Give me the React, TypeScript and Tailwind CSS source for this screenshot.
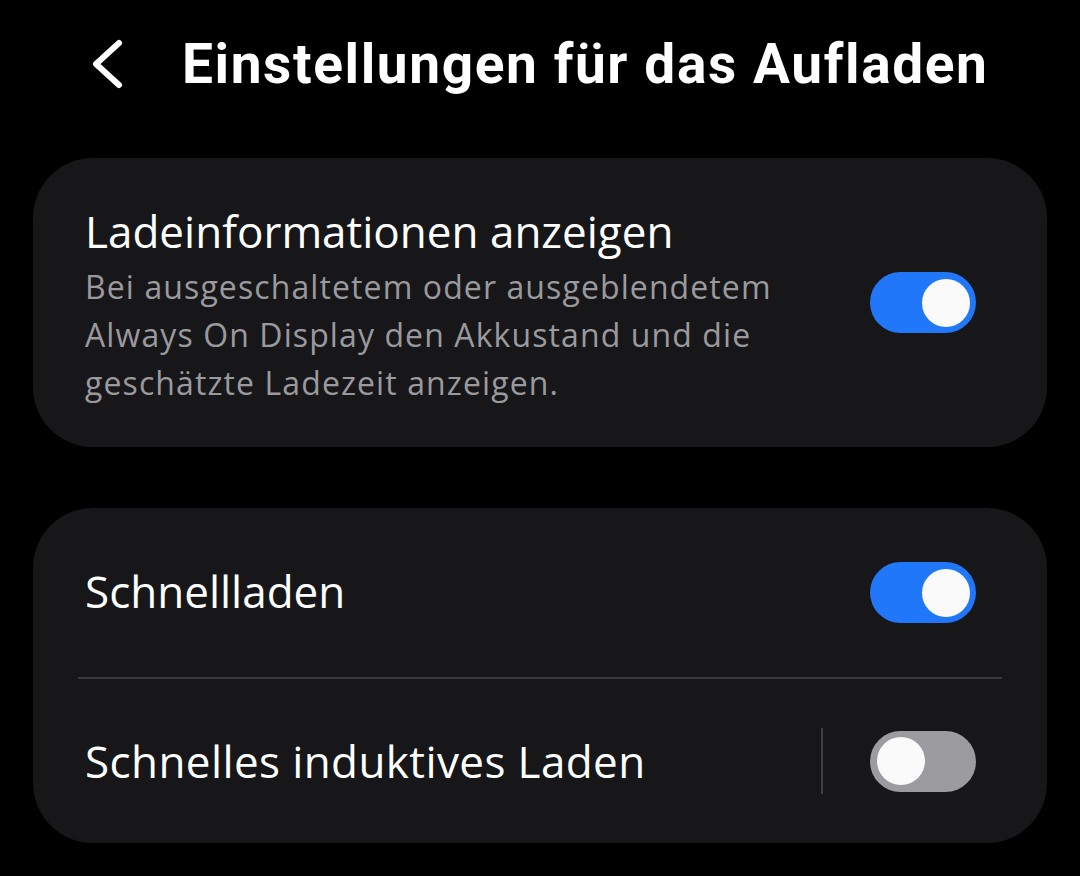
import React from "react";

function Toggle({ on }: { on: boolean }) {
  return (
    <div
      className={
        on
          ? "w-[106px] h-[61px] rounded-full bg-[#2177fa] flex items-center justify-end pr-[6px] shrink-0"
          : "w-[106px] h-[61px] rounded-full bg-[#9b9ba0] flex items-center justify-start pl-[7px] shrink-0"
      }
    >
      <div className="w-[48px] h-[48px] rounded-full bg-[#fafafa]" />
    </div>
  );
}

export default function App() {
  return (
    <div
      className="w-[1080px] h-[876px] bg-black text-white overflow-hidden"
      style={{ fontFamily: "'Open Sans', Roboto, sans-serif" }}
    >
      <div className="flex items-center h-[126px] pl-[86px] pt-[2px]">
        <svg width="40" height="52" viewBox="0 0 40 52" className="shrink-0">
          <path d="M33 5 L10 26 L33 47" fill="none" stroke="#fff" strokeWidth="6" strokeLinecap="round" strokeLinejoin="round" />
        </svg>
        <h1
          className="ml-[56px] text-[55px] font-bold leading-none tracking-[1.6px]"
          style={{ fontFamily: "Roboto, 'Open Sans', sans-serif" }}
        >
          Einstellungen für das Aufladen
        </h1>
      </div>

      <div className="mx-[33px] mt-[32px] rounded-[60px] bg-[#171719] h-[289px] flex items-center pl-[52px] pr-[71px]">
        <div className="flex-1 self-start pt-[48px]">
          <div className="text-[44px] leading-[50px] text-white">Ladeinformationen anzeigen</div>
          <div className="text-[32px] leading-[48px] tracking-[1.1px] text-[#9a9a9e] mt-[7px] w-[730px]">
            Bei ausgeschaltetem oder ausgeblendetem Always On Display den Akkustand und die geschätzte Ladezeit anzeigen.
          </div>
        </div>
        <Toggle on={true} />
      </div>

      <div className="mx-[33px] mt-[61px] rounded-[60px] bg-[#171719] h-[335px] flex flex-col">
        <div className="h-[169px] flex items-center pl-[52px] pr-[71px]">
          <div className="flex-1 text-[44px] text-white pb-[3px]">Schnellladen</div>
          <Toggle on={true} />
        </div>
        <div className="mx-[45px] h-[2px] bg-[#3a3a3d]" />
        <div className="flex-1 flex items-center pl-[52px] pr-[71px]">
          <div className="flex-1 text-[44px] tracking-[0.4px] text-white">Schnelles induktives Laden</div>
          <div className="w-[2px] h-[66px] bg-[#414144] mr-[47px]" />
          <Toggle on={false} />
        </div>
      </div>
    </div>
  );
}
